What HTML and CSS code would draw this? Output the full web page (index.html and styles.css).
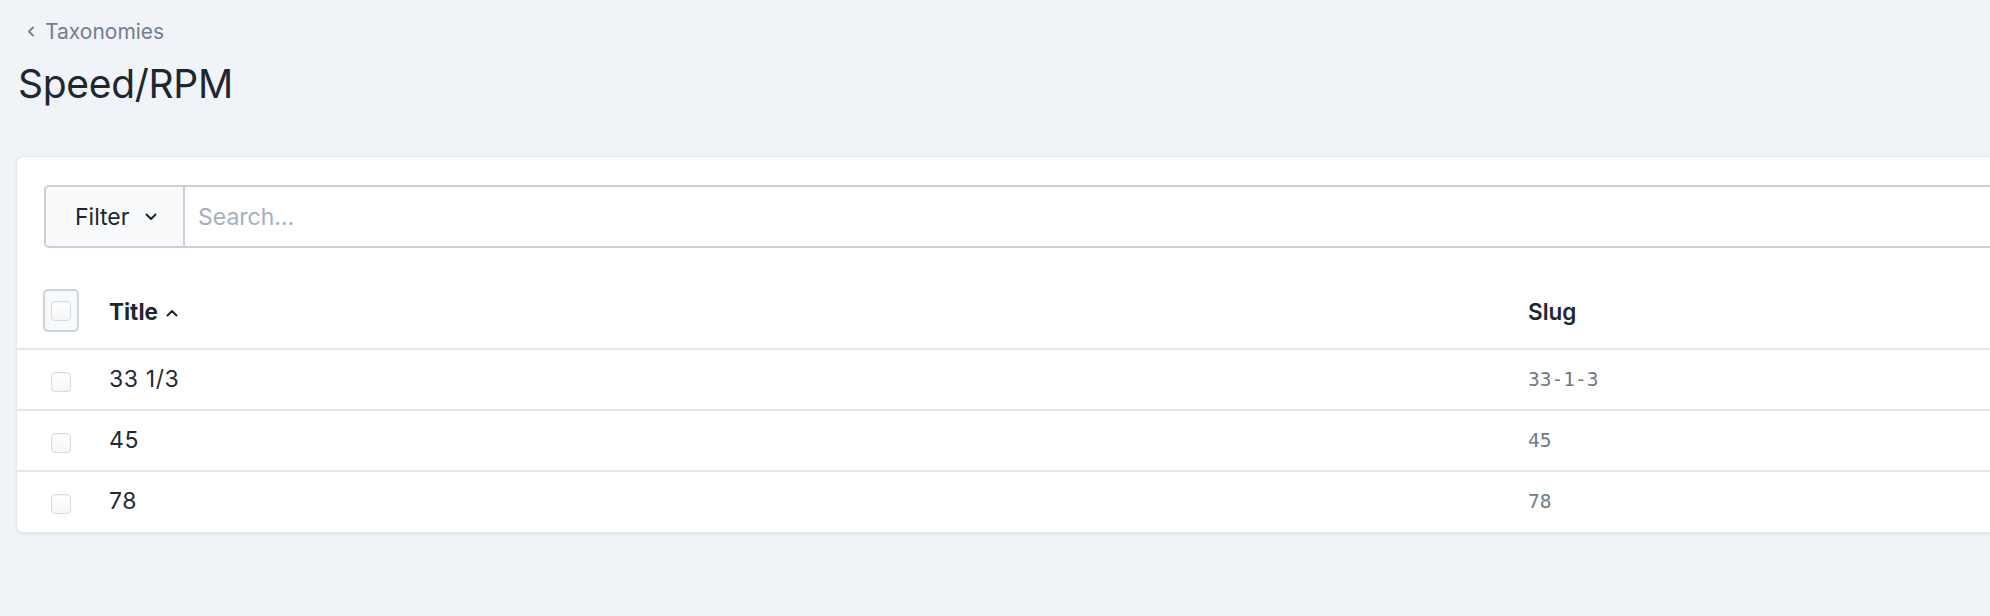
FILE: index.html
```html
<!DOCTYPE html>
<html>
<head>
<meta charset="utf-8">
<link rel="stylesheet" href="styles.css">
</head>
<body>
<div class="page">
  <div class="breadcrumb">
    <svg class="crumb-icon" width="8" height="11" viewBox="0 0 8 11"><polyline points="6,1.5 2,5.5 6,9.5" fill="none" stroke="#737f8c" stroke-width="1.8" stroke-linecap="round" stroke-linejoin="round"/></svg>
    <span>Taxonomies</span>
  </div>
  <h1 class="title">Speed/RPM</h1>
  <div class="card">
    <div class="searchbar">
      <button class="filter">Filter
        <svg width="12" height="8" viewBox="0 0 12 8"><polyline points="1.5,1.5 6,6 10.5,1.5" fill="none" stroke="#1c2730" stroke-width="2" stroke-linecap="round" stroke-linejoin="round"/></svg>
      </button>
      <div class="search">Search...</div>
    </div>
    <div class="row head">
      <div class="c1"><span class="check-wrap"><span class="check"></span></span></div>
      <div class="c2 th-title">Title
        <svg width="12" height="8" viewBox="0 0 12 8"><polyline points="1.5,6.5 6,2 10.5,6.5" fill="none" stroke="#1c2730" stroke-width="2" stroke-linecap="round" stroke-linejoin="round"/></svg>
      </div>
      <div class="c3 th-slug">Slug</div>
    </div>
    <div class="row">
      <div class="c1"><span class="check"></span></div>
      <div class="c2 cell">33 1/3</div>
      <div class="c3 slug">33-1-3</div>
    </div>
    <div class="row">
      <div class="c1"><span class="check"></span></div>
      <div class="c2 cell">45</div>
      <div class="c3 slug">45</div>
    </div>
    <div class="row last">
      <div class="c1"><span class="check"></span></div>
      <div class="c2 cell">78</div>
      <div class="c3 slug">78</div>
    </div>
  </div>
</div>
</body>
</html>
```

FILE: styles.css
```css
html, body {
  margin: 0;
  padding: 0;
  overflow: hidden;
  background: #f0f3f7;
}
body {
  font-family: Inter, "Noto Sans", sans-serif;
  color: #1c2730;
  width: 1990px;
  height: 616px;
}
.page {
  padding: 14px 0 0 17px;
}
.breadcrumb {
  display: flex;
  align-items: center;
  gap: 10px;
  margin-left: 10px;
  height: 34px;
  font-size: 21px;
  color: #737f8c;
}
.title {
  margin: 10px 0 0 1px;
  font-size: 39px;
  font-weight: 400;
  line-height: 52px;
  letter-spacing: -0.3px;
  color: #1c2730;
}
.card {
  margin-top: 47px;
  width: 2150px;
  background: #fff;
  border-radius: 6px;
  box-shadow: 0 0 0 1px #e3e7ec, 0 1px 3px rgba(30, 40, 60, 0.18);
  padding-top: 28px;
  padding-bottom: 1px;
}
.searchbar {
  display: flex;
  margin-left: 27px;
  margin-bottom: 25px;
  height: 63px;
}
.filter {
  display: flex;
  align-items: center;
  gap: 16px;
  box-sizing: border-box;
  width: 141px;
  padding: 0 0 0 29px;
  font-family: inherit;
  font-size: 23px;
  color: #1c2730;
  background: #f9fafb;
  border: 2px solid #c9d0d9;
  border-radius: 5px 0 0 5px;
}
.search {
  flex: 1;
  display: flex;
  align-items: center;
  box-sizing: border-box;
  padding-left: 13px;
  font-size: 23px;
  color: #a5b0bf;
  border: 2px solid #c9d0d9;
  border-left: none;
}
.row {
  display: grid;
  grid-template-columns: 92px 1419px 1fr;
  align-items: center;
  height: 59px;
  border-bottom: 2px solid #e3e7eb;
}
.row.head {
  height: 75px;
}
.row.last {
  border-bottom: none;
}
.c1 {
  display: flex;
  align-items: center;
  padding-left: 34px;
}
.row .c1 .check {
  margin-top: 4px;
}
.head .c1 {
  padding-left: 26px;
}
.check-wrap {
  display: flex;
  align-items: center;
  justify-content: center;
  box-sizing: border-box;
  width: 36px;
  height: 43px;
  border: 2px solid #ccd3dc;
  border-radius: 5px;
  background: #f8f9fb;
}
.head .check-wrap .check {
  margin-top: 0;
}
.check {
  display: block;
  box-sizing: border-box;
  width: 20px;
  height: 20px;
  border: 1px solid #d6dbe1;
  border-radius: 4px;
  background: linear-gradient(#ffffff, #f4f6f8);
  box-shadow: inset 0 1px 1px rgba(0, 0, 0, 0.04);
}
.th-title {
  display: flex;
  align-items: center;
  gap: 8px;
  font-size: 22.5px;
  font-weight: 700;
  padding-top: 2px;
}
.th-title svg {
  margin-top: 2px;
}
.th-slug {
  font-size: 22.5px;
  font-weight: 600;
  padding-top: 2px;
}
.cell {
  font-size: 23px;
  letter-spacing: 0.6px;
  color: #1f2b34;
  margin-top: -2px;
}
.slug {
  font-family: "DejaVu Sans Mono", monospace;
  font-size: 19.5px;
  color: #6f7b88;
}
```
